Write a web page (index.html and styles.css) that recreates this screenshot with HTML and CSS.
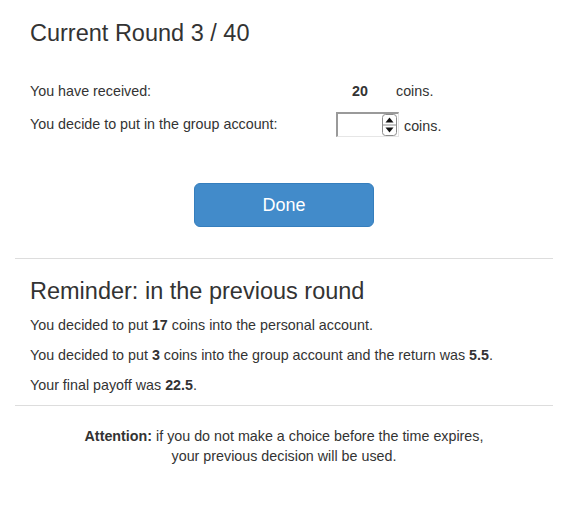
FILE: index.html
```html
<!DOCTYPE html>
<html>
<head>
<meta charset="utf-8">
<link rel="stylesheet" href="styles.css">
</head>
<body>
<div class="container">
  <div class="panel">
    <h3 class="title">Current Round 3 / 40</h3>
    <div class="decision">
      <div class="label">You have received:</div>
      <div class="value"><b class="num">20</b><span class="unit">coins.</span></div>
      <div class="label">You decide to put in the group account:</div>
      <div class="value">
        <span class="spin">
          <span class="spin-field"></span>
          <span class="spin-btns">
            <svg width="15" height="22" viewBox="0 0 15 22">
              <rect x="0.5" y="0.5" width="14" height="21" rx="3" fill="#fff" stroke="#8c8c8c"/>
              <line x1="1" y1="11" x2="14" y2="11" stroke="#8c8c8c"/>
              <path d="M3.5 8.5 L7.5 3.5 L11.5 8.5 Z" fill="#111"/>
              <path d="M3.5 13.5 L7.5 18.5 L11.5 13.5 Z" fill="#111"/>
            </svg>
          </span>
        </span><span class="unit2">coins.</span>
      </div>
    </div>
    <div class="actions">
      <button class="btn">Done</button>
    </div>
  </div>
  <hr class="rule rule-top">
  <div class="panel">
    <h3 class="title">Reminder: in the previous round</h3>
    <p>You decided to put <b>17</b> coins into the personal account.</p>
    <p>You decided to put <b>3</b> coins into the group account and the return was <b>5.5</b>.</p>
    <p>Your final payoff was <b>22.5</b>.</p>
  </div>
  <hr class="rule rule-bottom">
  <p class="attention"><b>Attention:</b> if you do not make a choice before the time expires,<br>your previous decision will be used.</p>
</div>
</body>
</html>
```
FILE: styles.css
```css
html, body {
  margin: 0;
  padding: 0;
  background: #fff;
}
body {
  font-family: "Liberation Sans", Arial, sans-serif;
  font-size: 14.3px;
  line-height: 20px;
  color: #333;
}
.container {
  padding: 0 15px;
}
.panel {
  padding: 0 15px;
}
.title {
  font-size: 23.5px;
  font-weight: 500;
  line-height: 26.4px;
  margin: 20px 0 10px;
}
.decision {
  display: grid;
  grid-template-columns: 306px auto;
  row-gap: 13px;
  margin-top: 35px;
}
.value {
  display: flex;
  align-items: center;
}
.num {
  margin-left: 16px;
  width: 44px;
}
.spin {
  display: inline-flex;
  align-items: center;
  width: 63px;
  height: 25px;
  box-sizing: border-box;
  border: 1px solid #e6e6e6;
  border-top: 2px solid #9a9a9a;
  border-left: 2px solid #9a9a9a;
  background: #fff;
  justify-content: flex-end;
  padding-right: 1px;
  margin-top: -2px;
}
.spin-field {
  flex: 1;
}
.spin-btns {
  display: flex;
}
.spin-btns svg {
  display: block;
}
.unit2 {
  margin-left: 5px;
}
.actions {
  display: flex;
  justify-content: center;
  margin-top: 46px;
}
.btn {
  width: 180px;
  height: 44px;
  font-family: "Liberation Sans", Arial, sans-serif;
  font-size: 18px;
  color: #fff;
  background: #428bca;
  border: 1px solid #357ebd;
  border-radius: 6px;
}
.rule {
  border: 0;
  border-top: 1px solid #ddd;
}
.rule-top {
  margin: 31px 0 0;
}
.rule-bottom {
  margin: 10px 0 0;
}
.rule + .panel .title {
  margin-top: 19px;
}
p {
  margin: 0 0 10px;
}
.attention {
  text-align: center;
  margin-top: 20px;
}
```
